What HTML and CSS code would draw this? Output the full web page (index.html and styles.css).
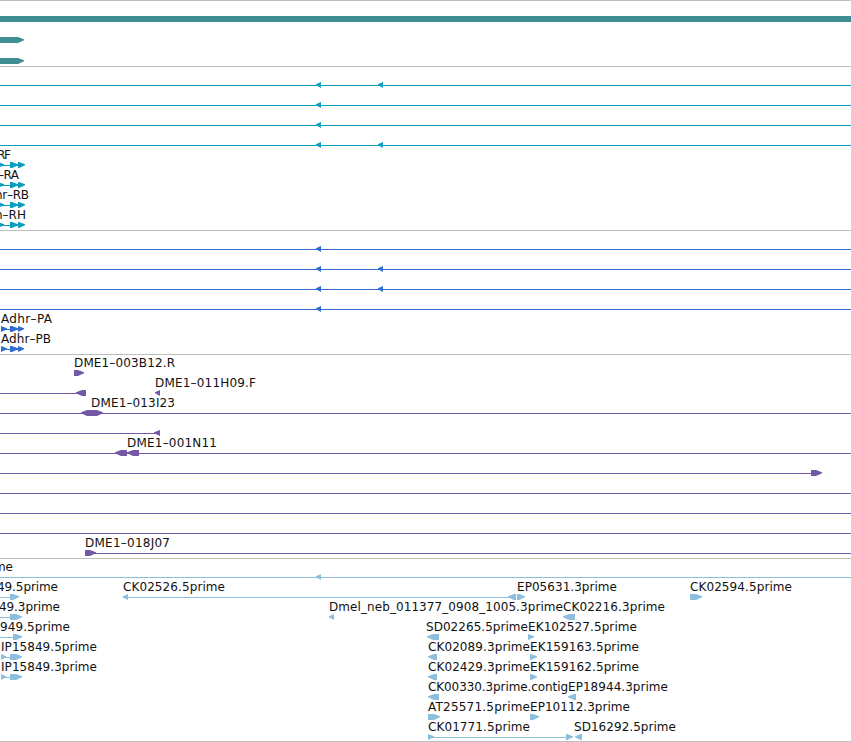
FILE: index.html
```
<!DOCTYPE html>
<html lang="en">
<head>
  <meta charset="UTF-8">
  <meta name="viewport" content="width=device-width, initial-scale=1.0">
  <title>Genome Browser</title>
  <link rel="stylesheet" href="styles.css">
</head>
<body>
  <div id="browser"></div>
  <script src="tracks.js"></script>
</body>
</html>
```
FILE: styles.css
```
body {
    margin: 0;
    background: white;
    font-family: "DejaVu Sans", sans-serif;
    overflow: hidden;
}

#browser {
    width: 851px;
    border-bottom: 1px solid #bebebe;
}

.track {
    display: flex;
    flex-direction: column;
    border-top: 1px solid #bebebe;
    padding-bottom: 3px;
}

.track.genes,
.track.est {
    padding-bottom: 2px;
}

.row {
    display: block;
    width: 851px;
    height: 20px;
    overflow: visible;
}

.genes .row {
    height: 21px;
}

.row text {
    font-size: 12px;
    fill: #111;
}

/* Track colors */
.genes {
    fill: #408e94;
}

.transcripts {
    fill: #089cbd;
}

.proteins {
    fill: #316dce;
}

.clones {
    fill: #7359a5;
}

.est {
    fill: #8cbede;
}
```
FILE: tracks.js
```
const WIDTH = 851;
const MID = 18;

// arrow: [start, end, direction], line: [start, end], label: [text, start, end]
const full = [[0, WIDTH]];
const exons = { lines: [[0, 20]], arrows: [[-3, 4, 'R'], [10, 18, 'R'], [18, 25, 'R']] };
const cds = { lines: [[1, 20]], arrows: [[1, 7, 'R'], [10, 18, 'R'], [18, 24, 'R']] };
const one = { lines: full, arrows: [[316, 321, 'L']] };
const two = { lines: full, arrows: [[316, 321, 'L'], [378, 383, 'L']] };

const tracks = [
  {
    name: 'genes',
    rows: [
      { arrows: [[0, WIDTH, '']] },
      { arrows: [[0, 24, 'R']] },
      { arrows: [[0, 24, 'R']] }
    ]
  },
  {
    name: 'transcripts',
    rows: [
      two, one, one, two,
      { ...exons, labels: [['RF', -3, 11]] },
      { ...exons, labels: [['–RA', -2, 19]] },
      { ...exons, labels: [['hr–RB', -5, 29]] },
      { ...exons, labels: [['h–RH', -5, 26]] }
    ]
  },
  {
    name: 'proteins',
    rows: [
      one, two, two, one,
      { ...cds, labels: [['Adhr–PA', 1, 52]] },
      { ...cds, labels: [['Adhr–PB', 1, 51]] }
    ]
  },
  {
    name: 'clones',
    rows: [
      { arrows: [[74, 84, 'R']], labels: [['DME1–003B12.R', 74, 175]] },
      { lines: [[0, 77]], arrows: [[76, 86, 'L'], [155, 160, 'L']], labels: [['DME1–011H09.F', 155, 256]] },
      { lines: full, arrows: [[81, 103, 'LR']], labels: [['DME1–013I23', 91, 175]] },
      { lines: [[0, 155]], arrows: [[154, 160, 'L']] },
      { lines: full, arrows: [[115, 127, 'L'], [127, 139, 'L']], labels: [['DME1–001N11', 127, 217]] },
      { lines: [[0, 811]], arrows: [[811, 822, 'R']] },
      { lines: full },
      { lines: full },
      { lines: full },
      { lines: [[85, WIDTH]], arrows: [[85, 96, 'R']], labels: [['DME1–018J07', 85, 170]] }
    ]
  },
  {
    name: 'est',
    rows: [
      { ...one, labels: [['me', -6, 13]] },
      {
        lines: [[0, 10], [123, 510]],
        arrows: [[10, 19, 'R'], [123, 128, 'L'], [508, 516, 'L'], [517, 525, 'R'], [690, 702, 'R']],
        labels: [['49.5prime', -3, 58], ['CK02526.5prime', 123, 225], ['EP05631.3prime', 517, 617], ['CK02594.5prime', 690, 792]]
      },
      {
        lines: [[0, 10]],
        arrows: [[10, 22, 'R'], [329, 334, 'L'], [563, 575, 'L']],
        labels: [['49.3prime', -1, 60], ['Dmel_neb_011377_0908_1005.3prime', 329, 563], ['CK02216.3prime', 563, 665]]
      },
      {
        lines: [[0, 13]],
        arrows: [[13, 22, 'R'], [427, 439, 'L'], [528, 534, 'R']],
        labels: [['949.5prime', 0, 70], ['SD02265.5prime', 426, 528], ['EK102527.5prime', 528, 637]]
      },
      {
        lines: [[1, 12]],
        arrows: [[1, 6, 'R'], [10, 22, 'R'], [428, 437, 'L'], [530, 537, 'R']],
        labels: [['IP15849.5prime', 1, 97], ['CK02089.3prime', 428, 530], ['EK159163.5prime', 530, 639]]
      },
      {
        lines: [[1, 12]],
        arrows: [[1, 6, 'R'], [10, 22, 'R'], [428, 437, 'L'], [530, 537, 'R']],
        labels: [['IP15849.3prime', 1, 97], ['CK02429.3prime', 428, 530], ['EK159162.5prime', 530, 639]]
      },
      {
        arrows: [[428, 439, 'L'], [568, 576, 'L']],
        labels: [['CK00330.3prime.contig', 428, 568], ['EP18944.3prime', 568, 668]]
      },
      {
        arrows: [[428, 440, 'R'], [530, 539, 'R']],
        labels: [['AT25571.5prime', 428, 530], ['EP10112.3prime', 530, 630]]
      },
      {
        lines: [[428, 568]],
        arrows: [[428, 434, 'R'], [566, 573, 'R'], [575, 582, 'L']],
        labels: [['CK01771.5prime', 428, 530], ['SD16292.5prime', 574, 676]]
      }
    ]
  }
];

// Box with a pointed end on one or both sides
function arrowPoints(start, end, dir) {
  const head = Math.min(6, end - start);
  const left = dir.includes('L') ? start + head : start;
  const right = dir.includes('R') ? end - head : end;
  const top = MID - 3;
  const bottom = MID + 3;
  // a side without a head keeps its square corners
  const rightTip = dir.includes('R') ? `${end},${MID - 0.8} ${end},${MID + 0.3} ` : '';
  const leftTip = dir.includes('L') ? ` ${start},${MID + 0.3} ${start},${MID - 0.8}` : '';
  return `${left},${top} ${right},${top} ${rightTip}${right},${bottom} ${left},${bottom}${leftTip}`;
}

function drawRow(row) {
  let svg = '<svg class="row">';
  for (const [start, end] of row.lines || []) {
    svg += `<rect x="${start}" y="${MID}" width="${end - start}" height="1"/>`;
  }
  for (const [start, end, dir] of row.arrows || []) {
    svg += `<polygon points="${arrowPoints(start, end, dir)}"/>`;
  }
  for (const [text, start, end] of row.labels || []) {
    svg += `<text x="${start}" y="12" textLength="${end - start}">${text}</text>`;
  }
  return svg + '</svg>';
}

document.getElementById('browser').innerHTML = tracks
  .map(track => `<div class="track ${track.name}">${track.rows.map(drawRow).join('')}</div>`)
  .join('');
```
